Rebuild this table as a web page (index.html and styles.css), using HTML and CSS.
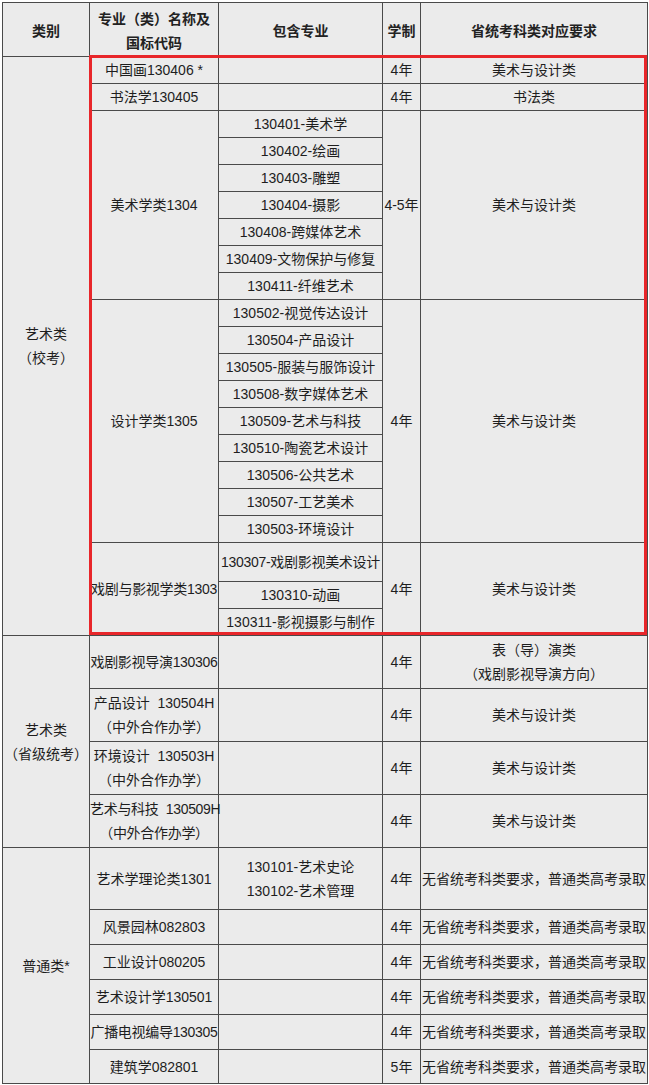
FILE: index.html
```html
<!DOCTYPE html>
<html lang="zh">
<head>
<meta charset="utf-8">
<title>专业表</title>
<link rel="stylesheet" href="styles.css">
</head>
<body>
<div class="wrap">
<table class="tbl">
<colgroup>
<col class="c1"><col class="c2"><col class="c3"><col class="c4"><col class="c5">
</colgroup>
<thead>
<tr class="h54"><th>类别</th><th>专业（类）名称及<br>国标代码</th><th>包含专业</th><th>学制</th><th>省统考科类对应要求</th></tr>
</thead>
<tbody>
<tr class="h27"><td rowspan="21">艺术类<br>（校考）</td><td>中国画130406 *</td><td></td><td>4年</td><td>美术与设计类</td></tr>
<tr class="h27"><td>书法学130405</td><td></td><td>4年</td><td>书法类</td></tr>
<tr class="h27"><td rowspan="7">美术学类1304</td><td>130401-美术学</td><td rowspan="7">4-5年</td><td rowspan="7">美术与设计类</td></tr>
<tr class="h27"><td>130402-绘画</td></tr>
<tr class="h27"><td>130403-雕塑</td></tr>
<tr class="h27"><td>130404-摄影</td></tr>
<tr class="h27"><td>130408-跨媒体艺术</td></tr>
<tr class="h27"><td>130409-文物保护与修复</td></tr>
<tr class="h27"><td>130411-纤维艺术</td></tr>
<tr class="h27"><td rowspan="9">设计学类1305</td><td>130502-视觉传达设计</td><td rowspan="9">4年</td><td rowspan="9">美术与设计类</td></tr>
<tr class="h27"><td>130504-产品设计</td></tr>
<tr class="h27"><td>130505-服装与服饰设计</td></tr>
<tr class="h27"><td>130508-数字媒体艺术</td></tr>
<tr class="h27"><td>130509-艺术与科技</td></tr>
<tr class="h27"><td>130510-陶瓷艺术设计</td></tr>
<tr class="h27"><td>130506-公共艺术</td></tr>
<tr class="h27"><td>130507-工艺美术</td></tr>
<tr class="h27"><td>130503-环境设计</td></tr>
<tr class="h39"><td rowspan="3" class="tight">戏剧与影视学类1303</td><td class="tight">130307-戏剧影视美术设计</td><td rowspan="3">4年</td><td rowspan="3">美术与设计类</td></tr>
<tr class="h27"><td>130310-动画</td></tr>
<tr class="h27"><td>130311-影视摄影与制作</td></tr>
<tr class="h53"><td rowspan="4">艺术类<br>（省级统考）</td><td class="tight">戏剧影视导演130306</td><td></td><td>4年</td><td>表（导）演类<br>（戏剧影视导演方向）</td></tr>
<tr class="h53"><td>产品设计&nbsp; 130504H<br>（中外合作办学）</td><td></td><td>4年</td><td>美术与设计类</td></tr>
<tr class="h53"><td>环境设计&nbsp; 130503H<br>（中外合作办学）</td><td></td><td>4年</td><td>美术与设计类</td></tr>
<tr class="h53"><td class="tight">艺术与科技&nbsp; 130509H<br>（中外合作办学）</td><td></td><td>4年</td><td>美术与设计类</td></tr>
<tr class="h62"><td rowspan="6">普通类*</td><td>艺术学理论类1301</td><td>130101-艺术史论<br>130102-艺术管理</td><td>4年</td><td class="left">无省统考科类要求，普通类高考录取</td></tr>
<tr class="h35"><td>风景园林082803</td><td></td><td>4年</td><td class="left">无省统考科类要求，普通类高考录取</td></tr>
<tr class="h35"><td>工业设计080205</td><td></td><td>4年</td><td class="left">无省统考科类要求，普通类高考录取</td></tr>
<tr class="h35"><td>艺术设计学130501</td><td></td><td>4年</td><td class="left">无省统考科类要求，普通类高考录取</td></tr>
<tr class="h35"><td class="tight">广播电视编导130305</td><td></td><td>4年</td><td class="left">无省统考科类要求，普通类高考录取</td></tr>
<tr class="h34"><td>建筑学082801</td><td></td><td>5年</td><td class="left">无省统考科类要求，普通类高考录取</td></tr>
</tbody>
</table>
<div class="highlight"></div>
</div>
</body>
</html>
```

FILE: styles.css
```css
html, body {
  margin: 0;
  padding: 0;
  background: #ffffff;
}

.wrap {
  position: relative;
  margin: 2px 0 0 2px;
  width: 645px;
}

.tbl {
  border-collapse: collapse;
  table-layout: fixed;
  width: 645px;
  background: #ebebeb;
  color: #1e1e1e;
  font-family: "Liberation Sans", "Noto Sans CJK SC", sans-serif;
  font-size: 14px;
  line-height: 24px;
}

.c1 { width: 87px; }
.c2 { width: 129px; }
.c3 { width: 164px; }
.c4 { width: 38px; }
.c5 { width: 227px; }

.tbl th,
.tbl td {
  border: 1px solid #4a4a4a;
  padding: 0;
  text-align: center;
  vertical-align: middle;
  white-space: nowrap;
  overflow: visible;
}

.tbl th {
  font-family: "Noto Sans CJK SC", sans-serif;
  font-weight: bold;
  font-size: 14px;
  color: #222;
}

.tbl td.tight {
  letter-spacing: -0.3px;
}

.tbl td.left {
  text-align: left;
  padding-left: 1px;
}

.h54 { height: 54px; }
.h27 { height: 27px; }
.h39 { height: 39px; }
.h53 { height: 53px; }
.h62 { height: 62px; }
.h35 { height: 35px; }
.h34 { height: 34px; }

.highlight {
  position: absolute;
  left: 87px;
  top: 53px;
  width: 558px;
  height: 580px;
  border: 3px solid #e8262a;
  box-sizing: border-box;
  pointer-events: none;
}
```
